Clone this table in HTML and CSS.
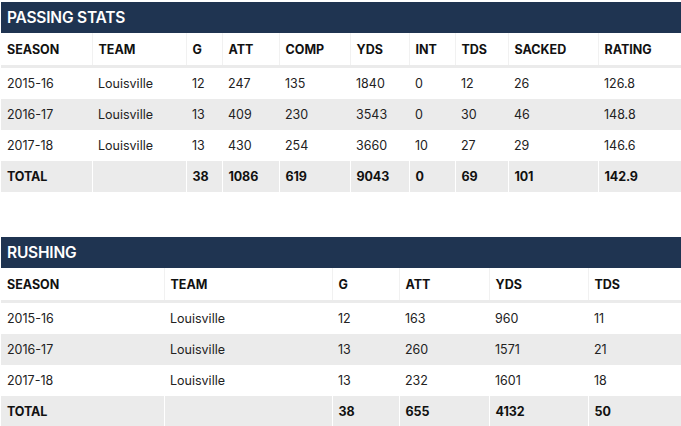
FILE: index.html
```html
<!DOCTYPE html>
<html>
<head>
<meta charset="utf-8">
<link rel="stylesheet" href="styles.css">
</head>
<body>
<section class="stats">
  <h2 class="title">PASSING STATS</h2>
  <table class="tbl">
    <colgroup>
      <col style="width:91px"><col style="width:94px"><col style="width:36px"><col style="width:57px"><col style="width:71px"><col style="width:59px"><col style="width:46px"><col style="width:53px"><col style="width:90px"><col style="width:83px">
    </colgroup>
    <thead>
      <tr><th>SEASON</th><th>TEAM</th><th>G</th><th>ATT</th><th>COMP</th><th>YDS</th><th>INT</th><th>TDS</th><th>SACKED</th><th>RATING</th></tr>
    </thead>
    <tbody>
      <tr><td>2015-16</td><td>Louisville</td><td>12</td><td>247</td><td>135</td><td>1840</td><td>0</td><td>12</td><td>26</td><td>126.8</td></tr>
      <tr class="alt"><td>2016-17</td><td>Louisville</td><td>13</td><td>409</td><td>230</td><td>3543</td><td>0</td><td>30</td><td>46</td><td>148.8</td></tr>
      <tr><td>2017-18</td><td>Louisville</td><td>13</td><td>430</td><td>254</td><td>3660</td><td>10</td><td>27</td><td>29</td><td>146.6</td></tr>
      <tr class="total"><td>TOTAL</td><td></td><td>38</td><td>1086</td><td>619</td><td>9043</td><td>0</td><td>69</td><td>101</td><td>142.9</td></tr>
    </tbody>
  </table>
</section>
<section class="stats second">
  <h2 class="title">RUSHING</h2>
  <table class="tbl">
    <colgroup>
      <col style="width:163px"><col style="width:168px"><col style="width:67px"><col style="width:90px"><col style="width:99px"><col style="width:93px">
    </colgroup>
    <thead>
      <tr><th>SEASON</th><th>TEAM</th><th>G</th><th>ATT</th><th>YDS</th><th>TDS</th></tr>
    </thead>
    <tbody>
      <tr><td>2015-16</td><td>Louisville</td><td>12</td><td>163</td><td>960</td><td>11</td></tr>
      <tr class="alt"><td>2016-17</td><td>Louisville</td><td>13</td><td>260</td><td>1571</td><td>21</td></tr>
      <tr><td>2017-18</td><td>Louisville</td><td>13</td><td>232</td><td>1601</td><td>18</td></tr>
      <tr class="total"><td>TOTAL</td><td></td><td>38</td><td>655</td><td>4132</td><td>50</td></tr>
    </tbody>
  </table>
</section>
</body>
</html>
```
FILE: styles.css
```css
html, body {
  margin: 0;
  padding: 0;
  background: #ffffff;
}
body {
  padding: 2px 0 0 1px;
  font-family: Inter, "Liberation Sans", sans-serif;
  color: #222;
}
.stats {
  width: 680px;
}
.second {
  margin-top: 45px;
}
.title {
  margin: 0;
  height: 31px;
  box-sizing: border-box;
  background: #1f3451;
  color: #ffffff;
  font-size: 15.5px;
  font-weight: 600;
  line-height: 31px;
  padding-left: 6px;
  letter-spacing: -0.2px;
}
.tbl {
  width: 680px;
  table-layout: fixed;
  border-collapse: collapse;
  border-spacing: 0;
}
.tbl th {
  height: 32px;
  padding: 0 0 0 6px;
  text-align: left;
  font-size: 12.5px;
  font-weight: 700;
  color: #111;
  border-right: 1px solid #f1f1f1;
  border-bottom: 3px solid #ebebeb;
  letter-spacing: 0;
}
.tbl th:last-child {
  border-right: none;
}
.tbl td {
  height: 31px;
  padding: 0 0 0 6px;
  font-size: 12.5px;
  font-weight: 400;
  color: #222;
  white-space: nowrap;
}
.tbl tr.alt td {
  background: #ebebeb;
}
.tbl tr.total td {
  background: #ebebeb;
  font-weight: 700;
  color: #111;
  height: 31px;
  border-right: 1px solid #ffffff;
  letter-spacing: -0.1px;
}
.tbl tr.total td:last-child {
  border-right: none;
}
```
